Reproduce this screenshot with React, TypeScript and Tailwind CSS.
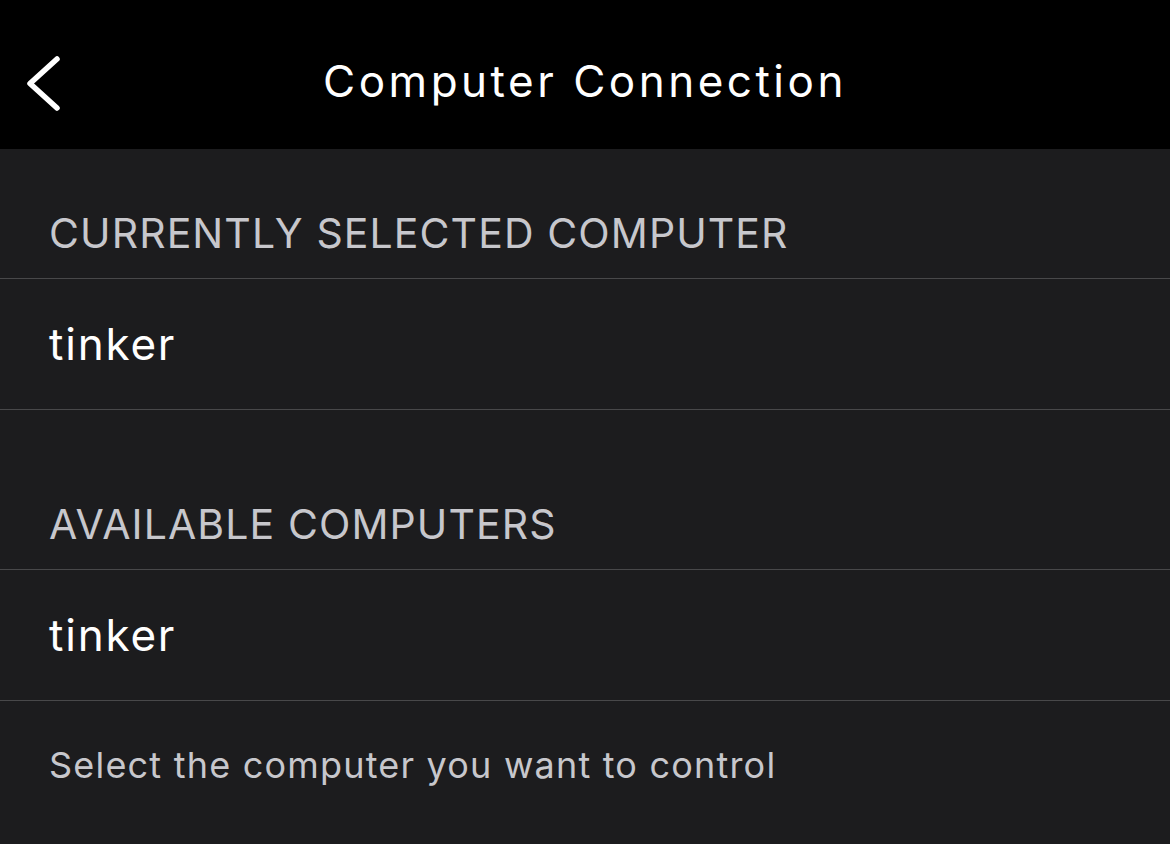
export default function App() {
  return (
    <div
      className="w-[1170px] h-[844px] bg-[#1c1c1e] text-white overflow-hidden"
      style={{ fontFamily: "Inter, Roboto, 'Liberation Sans', sans-serif" }}
    >
      <header className="relative h-[149px] bg-black flex items-center justify-center">
        <button className="absolute left-[20px] top-[50px] w-[44px] h-[68px]">
          <svg width="44" height="68" viewBox="0 0 44 68" fill="none">
            <path d="M37 9 L10 33.5 L37 58" stroke="white" strokeWidth="5.5" strokeLinecap="round" strokeLinejoin="round" />
          </svg>
        </button>
        <h1 className="pt-[12px] text-[44px] font-normal leading-none tracking-[3.5px]">Computer Connection</h1>
      </header>

      <section className="pt-[43px]">
        <div className="h-[86px] px-[49px] pb-[24px] flex items-end text-[41px] leading-none tracking-[1.1px] text-[#c7c7cc]">
          CURRENTLY SELECTED COMPUTER
        </div>
        <div className="border-t border-b border-[#48484a] h-[132px] px-[49px] flex items-center text-[44px] tracking-[1.8px]">
          tinker
        </div>
      </section>

      <section className="pt-[73px]">
        <div className="h-[86px] px-[49px] pb-[24px] flex items-end text-[41px] leading-none tracking-[1.1px] text-[#c7c7cc]">
          AVAILABLE COMPUTERS
        </div>
        <div className="border-t border-b border-[#48484a] h-[132px] px-[49px] flex items-center text-[44px] tracking-[1.8px]">
          tinker
        </div>
        <p className="px-[49px] pt-[46px] text-[36px] leading-none tracking-[1.2px] text-[#c7c7cc]">
          Select the computer you want to control
        </p>
      </section>
    </div>
  );
}
